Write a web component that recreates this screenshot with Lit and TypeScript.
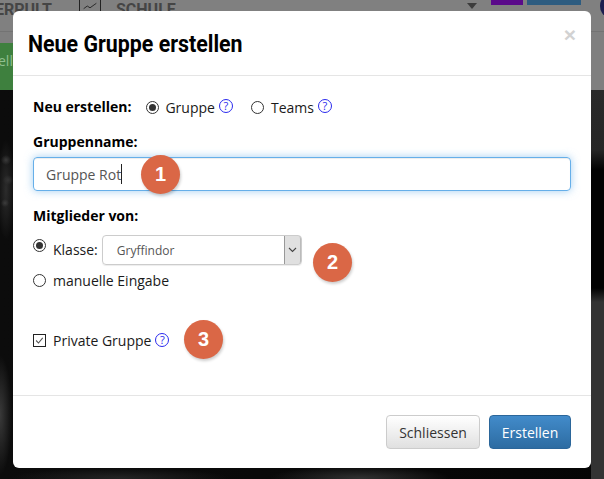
import { LitElement, html, css } from "lit";
import { customElement } from "lit/decorators.js";

@customElement("app-root")
export class AppRoot extends LitElement {
  static styles = css`
    :host { display: block; width: 604px; height: 479px; position: relative; overflow: hidden; background: #111; font-family: "Open Sans", sans-serif; font-size: 14px; color: #111; }
    * { box-sizing: border-box; }
    .page { width: 604px; height: 479px; display: flex; flex-direction: column; background:
      radial-gradient(circle 5px at 6px 160px, #3a3a3a, transparent),
      radial-gradient(circle 4px at 5px 203px, #3c3c3c, transparent),
      radial-gradient(circle 5px at 8px 180px, #343434, transparent),
      radial-gradient(ellipse 9px 50px at 6px 190px, #2c2c2c, transparent),
      radial-gradient(ellipse 12px 60px at 0 415px, #3a3a3a, transparent),
      radial-gradient(ellipse 90px 12px at 360px 478px, #303030, transparent),
      radial-gradient(ellipse 110px 10px at 120px 478px, #232323, transparent),
      linear-gradient(#2a2a2a 90px, #262626 150px, #020202 170px, #020202 288px, #333 302px, #333) 591px 0 / 13px 479px no-repeat,
      linear-gradient(90deg, #0c0c0c, #050505);
    }
    .nav { height: 32px; background: #808080; border-bottom: 1px solid #737373; display: flex; align-items: flex-start; overflow: hidden; flex: none; }
    .navtext { font-family: Roboto, sans-serif; font-weight: 700; font-size: 16px; color: #454545; line-height: 16px; margin-top: 2px; }
    .n1 { margin-left: -5px; width: 84px; flex: none; }
    .chart { width: 22px; height: 12px; border-left: 1px solid #222; border-right: 1px solid #222; flex: none; display: block; }
    .n2 { margin-left: 15px; flex: none; }
    .spacer { flex: 1; }
    .tri { width: 0; height: 0; border-left: 5px solid transparent; border-right: 5px solid transparent; border-top: 6px solid #3c3c3c; margin: 3px 14px 0 0; flex: none; }
    .tag { height: 5px; flex: none; }
    .purple { width: 32px; background: #5a0a8a; margin-right: 4px; }
    .blue { width: 54px; background: #2d5c80; }
    .avatar { width: 14px; height: 20px; margin: -4px -10px 0 19px; border-radius: 50%; background: #1d1d50; flex: none; }
    .strip { height: 58px; background: #7f7f7f; flex: none; }
    .green { margin-top: 11px; height: 47px; background: #3e803e; color: #8fbf8f; font-size: 14px; line-height: 36px; overflow: hidden; width: 20px; text-indent: -2px; }
    .modal { position: absolute; left: 13px; top: 11px; width: 578px; height: 457px; background: #fff; border-radius: 6px; display: flex; flex-direction: column; }
    .head { height: 65px; border-bottom: 1px solid #e5e5e5; padding: 15px 15px 0; display: flex; justify-content: space-between; flex: none; }
    h4 { margin: 0; font-family: Roboto, sans-serif; font-weight: 700; font-size: 24px; line-height: 36px; color: #000; transform: scaleX(.89); transform-origin: left center; white-space: nowrap; }
    .close { font-family: "Liberation Sans", sans-serif; font-weight: 700; font-size: 21px; line-height: 21px; color: #d2d2d2; margin: -2px 0 0; }
    .body { flex: 1; padding: 20px 20px 0; display: flex; flex-direction: column; }
    .row { display: flex; align-items: center; }
    b { font-weight: 700; color: #000; }
    .row, .input { color: #1a1a1a; }
    .r1 { height: 22px; }
    .r1 b { margin-right: 15px; margin-top: -2px; }
    .radio { width: 13px; height: 13px; border: 1px solid #333; border-radius: 50%; flex: none; display: flex; align-items: center; justify-content: center; background: #fff; }
    .radio.on::after { content: ""; width: 7px; height: 7px; border-radius: 50%; background: #333; }
    .lbl { margin-left: 7px; }
    .r1 .radio.on + .lbl { margin-left: 6px; }
    .help { width: 14px; height: 14px; border: 1.4px solid #2a2aee; border-radius: 50%; color: #2a2aee; font-size: 11px; line-height: 11px; text-align: center; margin-left: 4px; flex: none; margin-top: -2px; }
    .r4 .help { margin-top: 0; }
    .gap { margin-left: 18px; }
    .gl { margin-top: 14px; line-height: 20px; }
    .input { margin-top: 5px; height: 34px; width: 538px; border: 1px solid #66afe9; border-radius: 4px; box-shadow: inset 0 1px 1px rgba(0,0,0,.075), 0 0 8px rgba(102,175,233,.6); padding-left: 12px; display: flex; align-items: center; color: #555; flex: none; }
    .caret { width: 1px; height: 20px; background: #222; flex: none; }
    .ml { margin-top: 15px; line-height: 20px; }
    .r2 { margin-top: 9px; height: 30px; }
    .r2 .radio { margin-bottom: 9px; }
    .r2 .lbl { margin-right: 4px; margin-top: -2px; }
    .select { width: 200px; height: 30px; border: 1px solid #ccc; border-radius: 4px; display: flex; align-items: center; justify-content: space-between; padding-left: 14px; font-size: 12px; color: #555; box-shadow: 0 1px 1px rgba(0,0,0,.075); }
    .arrow { width: 17px; height: 28px; background: #e0e0e0; border-left: 1px solid #999; border-right: 1px solid #bbb; border-radius: 0 3px 3px 0; display: flex; align-items: center; justify-content: center; flex: none; }
    .r3 { margin-top: 5px; height: 20px; }
    .r4 { margin-top: 40px; height: 20px; }
    .check { width: 13px; height: 13px; border: 1.2px solid #222; flex: none; display: block; background: #fff; }
    .foot { height: 73px; border-top: 1px solid #e5e5e5; padding: 19px 20px 0 0; display: flex; justify-content: flex-end; gap: 9px; flex: none; }
    .btn { height: 34px; border-radius: 4px; display: flex; align-items: center; justify-content: center; font-size: 14px; }
    .default { width: 94px; border: 1px solid #ccc; color: #333; background: linear-gradient(#fff, #e0e0e0); }
    .primary { width: 82px; border: 1px solid #2b669a; color: #fff; background: linear-gradient(#428bca, #2d6ca2); }
    .badge { position: absolute; width: 39px; height: 39px; border-radius: 50%; background: #da6746; color: #fff; font-family: "Liberation Sans", sans-serif; font-weight: 700; font-size: 20px; display: flex; align-items: center; justify-content: center; box-shadow: 1px 2px 3px rgba(0,0,0,.2); }
    .b1 { left: 141px; top: 155px; }
    .b2 { left: 313px; top: 243px; }
    .b3 { left: 184px; top: 320px; }
  `;

  render() {
    return html`
      <div class="page">
        <div class="nav">
          <span class="navtext n1">ERPULT</span>
          <svg class="chart" viewBox="0 0 22 12"><path d="M4 9l4-3 3 2 7-5" fill="none" stroke="#222" stroke-width="1"/></svg>
          <span class="navtext n2">SCHULE</span>
          <span class="spacer"></span>
          <span class="tri"></span>
          <span class="tag purple"></span>
          <span class="tag blue"></span>
          <span class="avatar"></span>
        </div>
        <div class="strip"><div class="green">ell</div></div>
      </div>
      <div class="modal">
        <div class="head">
          <h4>Neue Gruppe erstellen</h4>
          <span class="close">×</span>
        </div>
        <div class="body">
          <div class="row r1">
            <b>Neu erstellen:</b>
            <span class="radio on"></span><span class="lbl">Gruppe</span><span class="help">?</span>
            <span class="radio gap"></span><span class="lbl">Teams</span><span class="help">?</span>
          </div>
          <b class="gl">Gruppenname:</b>
          <div class="input"><span>Gruppe Rot</span><span class="caret"></span></div>
          <b class="ml">Mitglieder von:</b>
          <div class="row r2">
            <span class="radio on"></span><span class="lbl">Klasse:</span>
            <div class="select"><span>Gryffindor</span>
              <span class="arrow"><svg width="9" height="6" viewBox="0 0 9 6"><path d="M1 1l3.5 3.5L8 1" fill="none" stroke="#444" stroke-width="1.1"/></svg></span>
            </div>
          </div>
          <div class="row r3"><span class="radio"></span><span class="lbl">manuelle Eingabe</span></div>
          <div class="row r4">
            <svg class="check" viewBox="0 0 13 13"><path d="M2.5 6.5l2.8 3 5-6" fill="none" stroke="#555" stroke-width="1.3"/></svg>
            <span class="lbl">Private Gruppe</span><span class="help">?</span>
          </div>
        </div>
        <div class="foot">
          <div class="btn default">Schliessen</div>
          <div class="btn primary">Erstellen</div>
        </div>
      </div>
      <div class="badge b1">1</div>
      <div class="badge b2">2</div>
      <div class="badge b3">3</div>
    `;
  }
}
